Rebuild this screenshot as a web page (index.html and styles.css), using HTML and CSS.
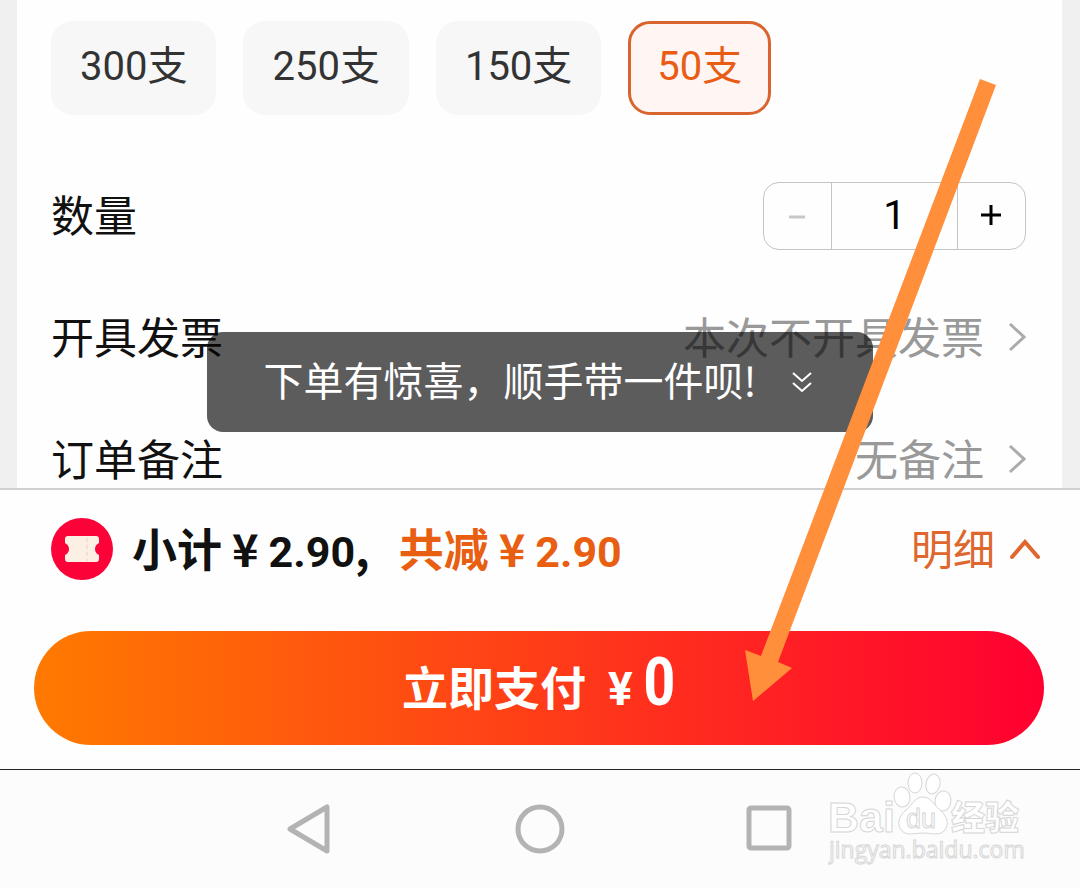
FILE: index.html
```html
<!DOCTYPE html>
<html lang="zh-CN">

<head>
    <meta charset="UTF-8">
    <meta name="viewport" content="width=device-width, initial-scale=1.0">
    <title>确认订单</title>
    <link rel="stylesheet" href="styles.css">
</head>

<body>
    <main class="sheet">
        <div class="order-card">
            <div class="options">
                <button type="button" class="option">300支</button>
                <button type="button" class="option">250支</button>
                <button type="button" class="option">150支</button>
                <button type="button" class="option selected">50支</button>
            </div>

            <div class="row">
                <label for="quantity">数量</label>
                <div class="stepper">
                    <button type="button" class="minus" aria-label="减少">
                        <svg width="22" height="22" viewBox="0 0 22 22"><path d="M2 12H18" stroke="#c8c8c8" stroke-width="3" /></svg>
                    </button>
                    <input type="text" id="quantity" value="1" inputmode="numeric">
                    <button type="button" class="plus" aria-label="增加">
                        <svg width="22" height="22" viewBox="0 0 22 22"><path d="M0 10H20M10 0V20" stroke="#000" stroke-width="3" /></svg>
                    </button>
                </div>
            </div>

            <div class="row">
                <span class="name">开具发票</span>
                <a href="#" class="value"><span>本次不开具发票</span>
                    <svg width="18" height="30" viewBox="0 0 18 30"><path d="M2 1L16 14L2 27" fill="none" stroke="#ababab" stroke-width="3" /></svg>
                </a>
            </div>

            <div class="row last">
                <span class="name">订单备注</span>
                <a href="#" class="value"><span>无备注</span>
                    <svg width="18" height="30" viewBox="0 0 18 30"><path d="M2 1L16 14L2 27" fill="none" stroke="#ababab" stroke-width="3" /></svg>
                </a>
            </div>
        </div>

        <div class="toast">
            <span>下单有惊喜，顺手带一件呗!</span>
            <svg width="20" height="22" viewBox="0 0 20 22"><path d="M1 2L10 10L19 2M1 12L10 20L19 12" fill="none" stroke="#fff" stroke-width="2" /></svg>
        </div>
    </main>

    <section class="checkout">
        <div class="summary">
            <svg class="coupon" width="64" height="64" viewBox="0 0 64 64">
                <circle cx="32" cy="31" r="31" fill="#fb0338" />
                <path d="M18 18H46Q49 18 49 21V25Q45 27 45 31T49 37V41Q49 44 46 44H18Q15 44 15 41V37Q19 35 19 31T15 25V21Q15 18 18 18Z" fill="#fbf0e3" />
                <path d="M37 20V43" stroke="#f8ddd3" stroke-width="2" stroke-dasharray="4 3" />
            </svg>
            <div class="total"><span>小计</span><span class="sign">¥</span><span class="price">2.90</span><span>,</span></div>
            <div class="total saved"><span>共减</span><span class="sign">¥</span><span class="price">2.90</span></div>
            <button type="button" class="detail"><span>明细</span>
                <svg width="32" height="22" viewBox="0 0 32 22"><path d="M3 18L16 3L29 18" fill="none" stroke="#df662d" stroke-width="4" stroke-linecap="round" /></svg>
            </button>
        </div>
        <button type="button" class="pay">
            <span>立即支付</span><span class="yen">¥</span><span class="amount">0</span>
        </button>
    </section>

    <nav class="system-nav">
        <button type="button" aria-label="返回">
            <svg width="50" height="50" viewBox="0 0 50 50"><path d="M5 25L42 3V47Z" /></svg>
        </button>
        <button type="button" aria-label="主页">
            <svg width="50" height="50" viewBox="0 0 50 50"><circle cx="25" cy="25" r="22" /></svg>
        </button>
        <button type="button" aria-label="最近任务">
            <svg width="50" height="50" viewBox="0 0 50 50"><rect x="4" y="4" width="40" height="40" rx="2" /></svg>
        </button>
        <svg class="watermark" width="200" height="98" viewBox="0 0 200 98">
            <text class="brand" x="0" y="62">Bai</text>
            <ellipse cx="74" cy="27" rx="8" ry="10" transform="rotate(-8 74 27)" />
            <ellipse cx="87" cy="13" rx="7" ry="10" />
            <ellipse cx="105" cy="14" rx="7" ry="10" transform="rotate(12 105 14)" />
            <ellipse cx="115" cy="31" rx="8" ry="10" transform="rotate(8 115 31)" />
            <path d="M95 27C103 27 105 34 112 40C119 46 122 54 116 61C111 66 103 63 95 63C87 63 79 66 74 61C68 54 71 46 78 40C85 34 87 27 95 27Z" />
            <text class="du" x="78" y="58">du</text>
            <text class="word" x="123" y="60">经验</text>
            <text class="site" x="1" y="88">jingyan.baidu.com</text>
        </svg>
    </nav>

    <svg class="arrow" width="252" height="622" viewBox="0 0 252 622">
        <path d="M235 0L251 6L33 583L47 589L8 622L0 571L16 577Z" fill="#ff8f3a" />
    </svg>
</body>

</html>
```
FILE: styles.css
```css
* {
    box-sizing: border-box;
}

body {
    position: relative;
    display: flex;
    flex-direction: column;
    min-height: 100vh;
    margin: 0;
    background-color: #fefefe;
    color: #111;
    font-family: "Noto Sans CJK SC", sans-serif;
    font-size: 43px;
    line-height: 50px;
}

button,
input {
    margin: 0;
    padding: 0;
    border: none;
    background: none;
    color: inherit;
    font: inherit;
}

button {
    cursor: pointer;
}

svg {
    display: block;
    flex-shrink: 0;
}

.sheet {
    position: relative;
    padding: 0 18px 0 17px;
    background-color: #f0f0f0;
    border-bottom: 2px solid #d0d0d0;
}

.order-card {
    padding: 21px 36px 0 34px;
    background-color: #fefefe;
    overflow: hidden;
}

.options {
    display: flex;
    gap: 27px;
    margin-bottom: 40px;
}

.option {
    height: 94px;
    padding: 0 29px 2px;
    border-radius: 22px;
    background-color: #f7f7f7;
    color: #333;
    font-family: Roboto, "Noto Sans CJK SC", sans-serif;
    font-size: 40px;
}

.option.selected {
    padding: 0 26px 2px;
    border: 3px solid #d9642e;
    background-color: #fff5f3;
    color: #e85c14;
}

.row {
    display: flex;
    align-items: center;
    justify-content: space-between;
    height: 122px;
}

.row.last {
    margin-bottom: -33px;
}

.row label,
.name,
.value span {
    padding-bottom: 6px;
}

.value {
    display: flex;
    align-items: center;
    gap: 24px;
    color: #999;
    text-decoration: none;
}

.stepper {
    display: flex;
    height: 68px;
    border: 1px solid #c4c4c4;
    border-radius: 16px;
}

.stepper button {
    display: flex;
    align-items: center;
    justify-content: center;
    width: 67px;
}

.stepper input {
    width: 127px;
    border: solid #c4c4c4;
    border-width: 0 1px;
    color: #000;
    font-family: Roboto, sans-serif;
    font-size: 40px;
    text-align: center;
}

.toast {
    position: absolute;
    bottom: 56px;
    left: 50%;
    display: flex;
    align-items: center;
    justify-content: center;
    gap: 36px;
    width: 666px;
    height: 100px;
    padding-right: 4px;
    border-radius: 16px;
    background-color: rgba(0, 0, 0, 0.64);
    color: #fff;
    font-size: 40px;
    white-space: nowrap;
    transform: translateX(-50%);
}

.toast span {
    padding-bottom: 6px;
}

.checkout {
    padding: 28px 36px 24px 34px;
}

.summary {
    display: flex;
    align-items: center;
    height: 64px;
    margin-bottom: 49px;
    padding: 0 3px 0 16px;
}

.total {
    display: flex;
    align-items: baseline;
    margin-left: 18px;
    font-size: 45px;
    font-weight: 700;
    white-space: nowrap;
}

.sign {
    margin: 0 10px;
}

.price {
    font-family: Roboto, sans-serif;
    font-size: 43px;
}

.saved {
    margin-left: 29px;
    color: #e85f12;
}

.detail {
    display: flex;
    align-items: center;
    gap: 14px;
    margin-left: auto;
    color: #df662d;
    font-size: 42px;
}

.detail span {
    padding-bottom: 6px;
}

.pay {
    display: flex;
    align-items: baseline;
    justify-content: center;
    width: 100%;
    height: 114px;
    padding-bottom: 10px;
    border-radius: 57px;
    background: linear-gradient(90deg, #ff7a00, #ff0030);
    color: #fff;
    font-size: 46px;
    font-weight: 700;
    line-height: 104px;
}

.yen {
    margin: 0 10px 0 22px;
    font-family: Roboto, sans-serif;
}

.amount {
    font-family: "Roboto Condensed", Roboto, sans-serif;
    font-size: 66px;
    font-weight: 600;
}

.system-nav {
    position: relative;
    display: flex;
    flex: 1;
    align-items: center;
    justify-content: center;
    gap: 180px;
    min-height: 119px;
    border-top: 1px solid #222;
    background-color: #fcfcfc;
}

.system-nav button svg {
    fill: none;
    stroke: #b3b3b3;
    stroke-width: 5;
    stroke-linejoin: round;
}

.watermark {
    position: absolute;
    top: 0;
    right: 52px;
    fill: #fff;
    stroke: #d6d6d6;
    stroke-width: 1;
}

.brand {
    font: 700 43px "Liberation Sans", sans-serif;
}

.du {
    font: 400 27px "Liberation Sans", sans-serif;
}

.word {
    font: 900 34px "Noto Sans CJK SC", sans-serif;
}

.site {
    font: 400 23px "Open Sans", sans-serif;
}

/* pointer to the pay button */
.arrow {
    position: absolute;
    top: 79px;
    right: 83px;
    pointer-events: none;
}
```
